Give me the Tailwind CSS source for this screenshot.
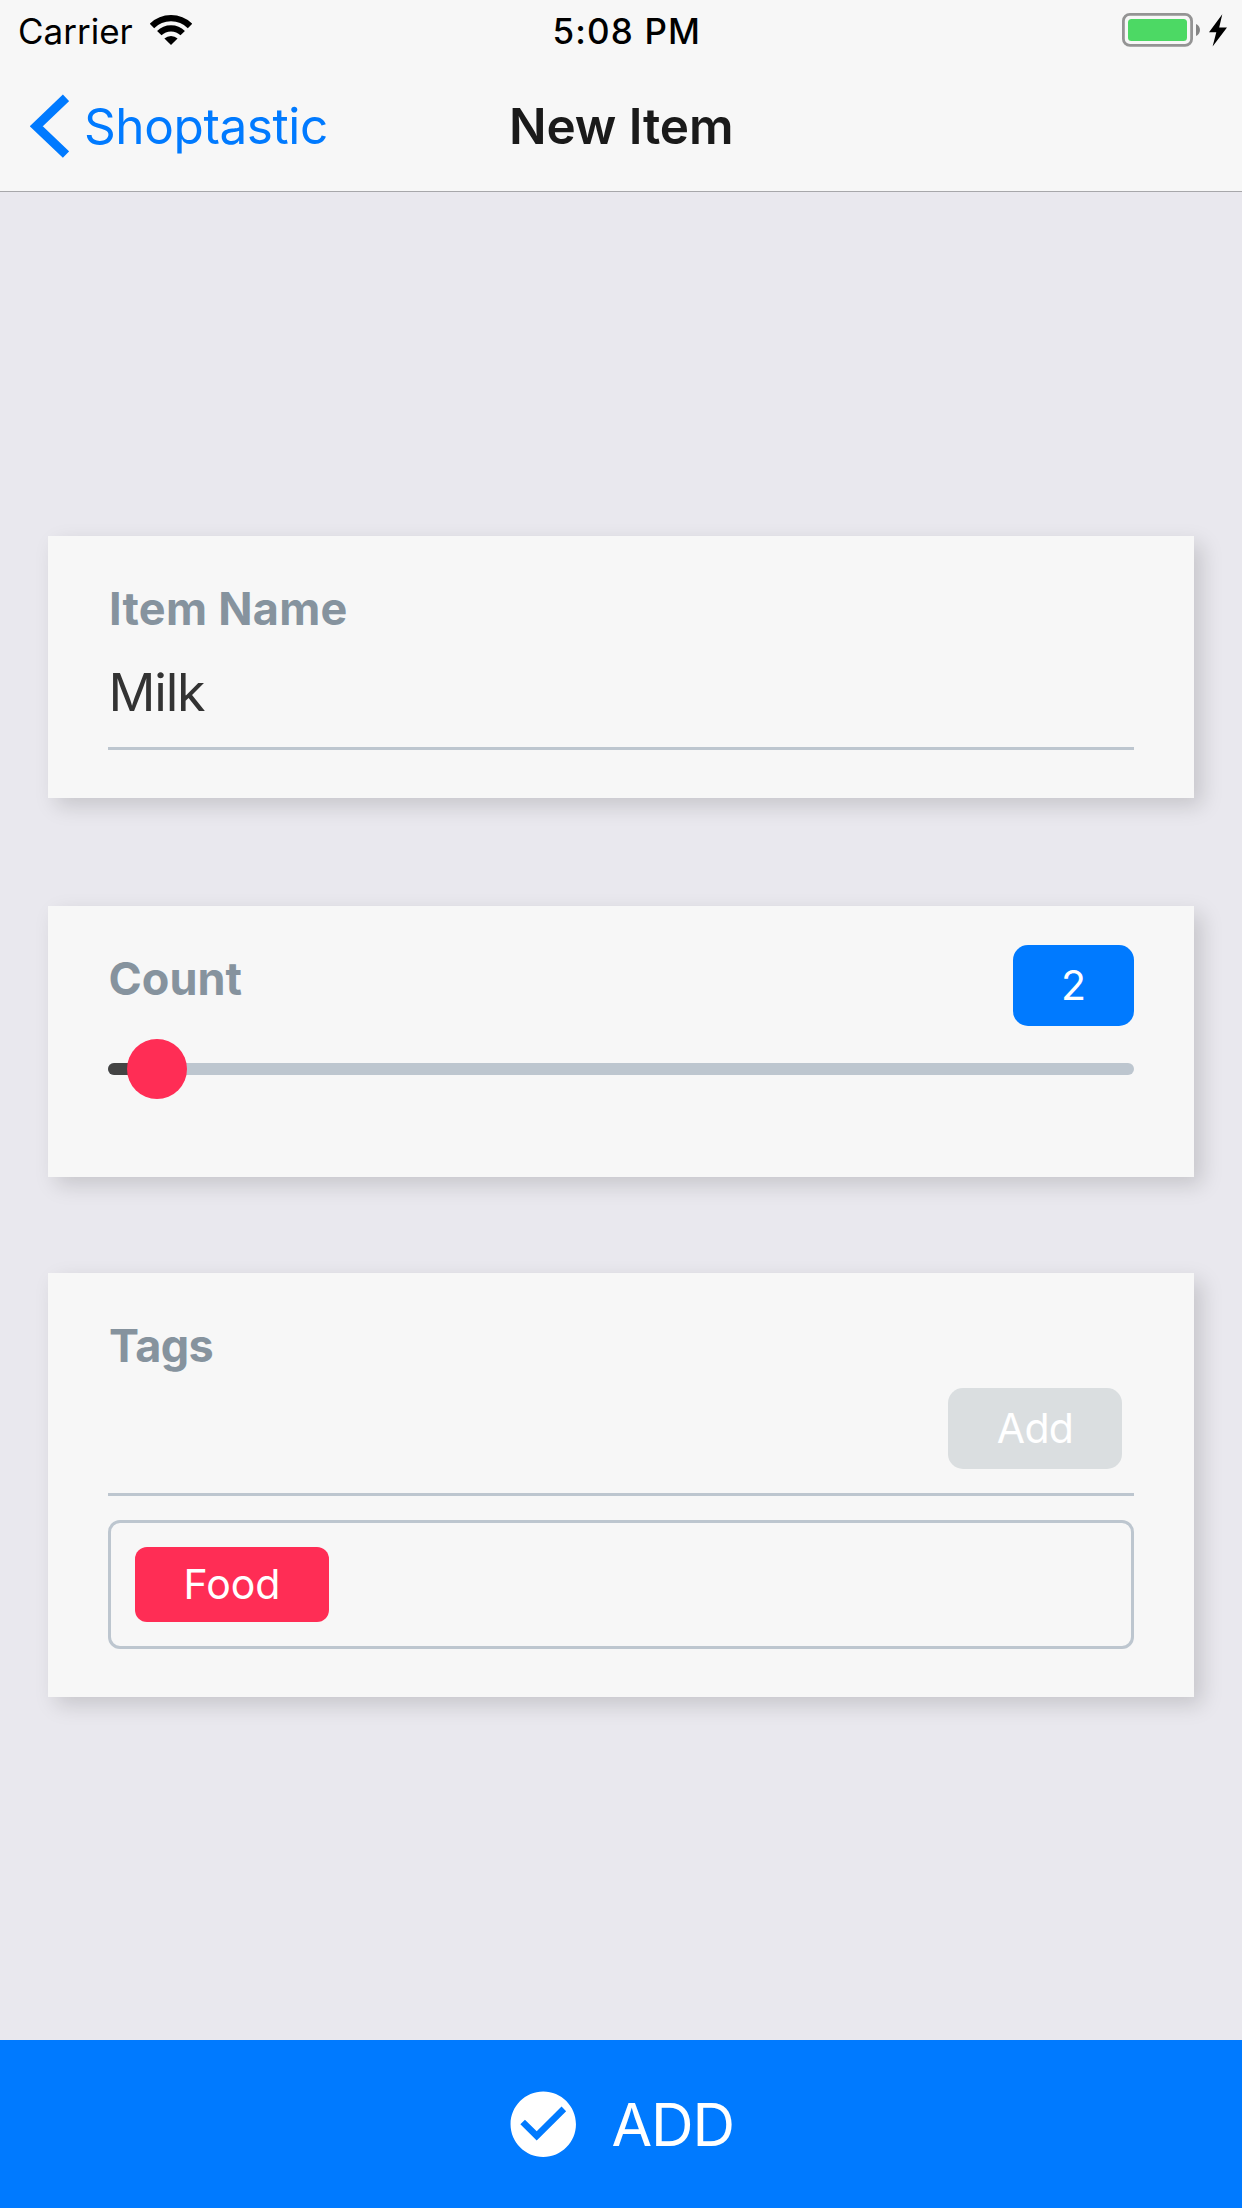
<!DOCTYPE html>
<html lang="en">
<head>
<meta charset="utf-8">
<title>New Item</title>
<script src="https://cdn.jsdelivr.net/npm/@tailwindcss/browser@4"></script>
</head>
<body class="flex h-[2208px] w-[1242px] flex-col overflow-hidden bg-[#e9e8ee] font-[Inter,sans-serif] antialiased">
  <header class="flex h-[192px] flex-col border-b border-[#a7a7aa] bg-[#f7f7f7]">
    <!-- Status bar -->
    <div class="grid h-[62px] grid-cols-3 text-[35px] leading-[62px] text-black">
      <div class="flex pl-[18px]">
        <span class="w-[132px]">Carrier</span>
        <svg class="mt-[15px] h-[30px] w-[42px]" viewBox="0 0 42 30" fill="none">
          <path d="M2 11A27 27 0 0 1 40 11" stroke="#000" stroke-width="6.2"/>
          <path d="M9.3 18.2A16.4 16.4 0 0 1 32.7 18.2" stroke="#000" stroke-width="6.2"/>
          <path d="M14.4 23.6A9.4 9.4 0 0 1 27.6 23.6L21 30Z" fill="#000"/>
        </svg>
      </div>
      <div class="pl-[138.5px] font-medium tracking-[1.14px] whitespace-nowrap">5:08 PM</div>
      <div class="flex justify-end pr-[12px]">
        <svg class="mt-[10px] h-[40px] w-[110px]" viewBox="1120 10 110 40">
          <rect x="1123.4" y="14.4" width="68.2" height="31" rx="6.5" fill="none" stroke="#949494" stroke-width="2.8"/>
          <rect x="1128" y="19" width="59" height="22" rx="3.5" fill="#4cd964"/>
          <path d="M1196 24C1201.3 26 1201.3 34 1196 36Z" fill="#858585"/>
          <path d="M1222.3 14.3L1209 32.2H1216.3L1212.6 46.5L1227 27.4H1219.2Z" fill="#000"/>
        </svg>
      </div>
    </div>
    <!-- Navigation bar -->
    <nav class="grid h-[129px] grid-cols-3 text-[49.5px] leading-[129px]">
      <a class="flex items-center pl-[30px] tracking-[-0.4px] text-[#007aff]">
        <svg class="mr-[15px] mb-[2px] h-[64px] w-[39px] shrink-0" viewBox="0 0 39 64" fill="none">
          <path d="M36 3.8L6.3 32.2L36 60.6" stroke="#007aff" stroke-width="9"/>
        </svg>
        <span>Shoptastic</span>
      </a>
      <h1 class="pl-[95px] font-semibold tracking-[-0.12px] text-[#1a1a1a]">New Item</h1>
    </nav>
  </header>

  <main class="flex grow flex-col px-[48px] pt-[344px]">
    <section class="h-[262px] bg-[#f7f7f7] px-[60px] pt-[42px] shadow-[8px_8px_20px_rgba(0,0,0,0.15)]">
      <h2 class="pl-px text-[45px] leading-[62px] font-bold tracking-[0.27px] text-[#86939e]">Item Name</h2>
      <div class="h-[110px] border-b-[3px] border-[#bdc6cf] pl-[0.5px] text-[52px] leading-[106px] tracking-[-1.2px] text-[#333]">Milk</div>
    </section>

    <section class="mt-[108px] h-[271px] bg-[#f7f7f7] px-[60px] pt-[39px] shadow-[8px_8px_20px_rgba(0,0,0,0.15)]">
      <div class="flex items-start justify-between">
        <h2 class="pt-[3px] pl-[0.5px] text-[45px] leading-[62px] font-bold text-[#86939e]">Count</h2>
        <div class="h-[81px] w-[121px] rounded-[15px] bg-[#007aff] text-center text-[41px] leading-[81px] text-white">2</div>
      </div>
      <div class="relative mt-[37px] h-[12px] overflow-visible rounded-full bg-[#bdc6cf]">
        <div class="h-[12px] w-[49px] rounded-l-full bg-[#444]"></div>
        <div class="absolute top-[-24px] left-[19.3px] size-[60px] rounded-full bg-[#ff2d55]"></div>
      </div>
    </section>

    <section class="mt-[96px] h-[424px] bg-[#f7f7f7] px-[60px] pt-[42px] shadow-[8px_8px_20px_rgba(0,0,0,0.15)]">
      <h2 class="pl-px text-[45px] leading-[62px] font-bold tracking-[-0.6px] text-[#86939e]">Tags</h2>
      <div class="flex h-[119px] justify-end border-b-[3px] border-[#bdc6cf] pt-[11px] pr-[12px]">
        <button class="h-[81px] w-[174px] rounded-[15px] bg-[#dadee0] text-center text-[41px] leading-[81px] tracking-[-0.7px] text-white">Add</button>
      </div>
      <div class="mt-[24px] flex h-[129px] rounded-[12px] border-[3px] border-[#bdc6cf] p-[24px]">
        <span class="h-[75px] w-[194px] rounded-[12px] bg-[#ff2d55] text-center text-[41px] leading-[75px] text-white">Food</span>
      </div>
    </section>
  </main>

  <footer class="flex h-[168px] items-center bg-[#007aff] pl-[504px] text-white">
    <svg class="size-[78.5px]" viewBox="0 0 24 24" fill="#fff">
      <path d="M12 2C6.48 2 2 6.48 2 12s4.48 10 10 10 10-4.48 10-10S17.52 2 12 2zm-2 15l-5-5 1.41-1.41L10 14.17l7.59-7.59L19 8l-9 9z"/>
    </svg>
    <span class="pt-[2px] pl-[29px] text-[59px] leading-[166px] tracking-[-1.2px]">ADD</span>
  </footer>
</body>
</html>
